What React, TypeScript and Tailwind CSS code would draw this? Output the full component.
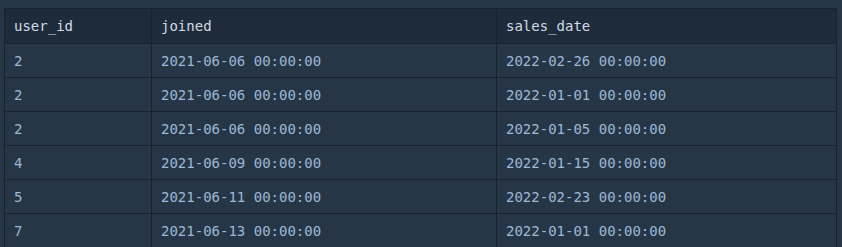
const rows = [
  ["2", "2021-06-06 00:00:00", "2022-02-26 00:00:00"],
  ["2", "2021-06-06 00:00:00", "2022-01-01 00:00:00"],
  ["2", "2021-06-06 00:00:00", "2022-01-05 00:00:00"],
  ["4", "2021-06-09 00:00:00", "2022-01-15 00:00:00"],
  ["5", "2021-06-11 00:00:00", "2022-02-23 00:00:00"],
  ["7", "2021-06-13 00:00:00", "2022-01-01 00:00:00"],
];

export default function App() {
  return (
    <div className="h-[247px] w-[842px] overflow-hidden bg-[#263646] pt-2 pl-1 pr-[5px] font-['DejaVu_Sans_Mono',monospace] text-sm">
      <table className="w-full table-fixed border-collapse">
        <colgroup>
          <col className="w-[147px]" />
          <col className="w-[345px]" />
          <col />
        </colgroup>
        <thead>
          <tr className="h-[35px] bg-[#1e2b3b] text-[#d3dbe4]">
            <th className="border border-[#19232f] pl-[9px] pr-[10px] text-left font-normal">user_id</th>
            <th className="border border-[#19232f] pl-[9px] pr-[10px] text-left font-normal">joined</th>
            <th className="border border-[#19232f] pl-[9px] pr-[10px] text-left font-normal">sales_date</th>
          </tr>
        </thead>
        <tbody>
          {rows.map((r, i) => (
            <tr key={i} className="h-[34px] bg-[#263646] text-[#9cb9d6]">
              {r.map((c, j) => (
                <td key={j} className="border border-[#19232f] pl-[9px] pr-[10px]">
                  {c}
                </td>
              ))}
            </tr>
          ))}
        </tbody>
      </table>
    </div>
  );
}
